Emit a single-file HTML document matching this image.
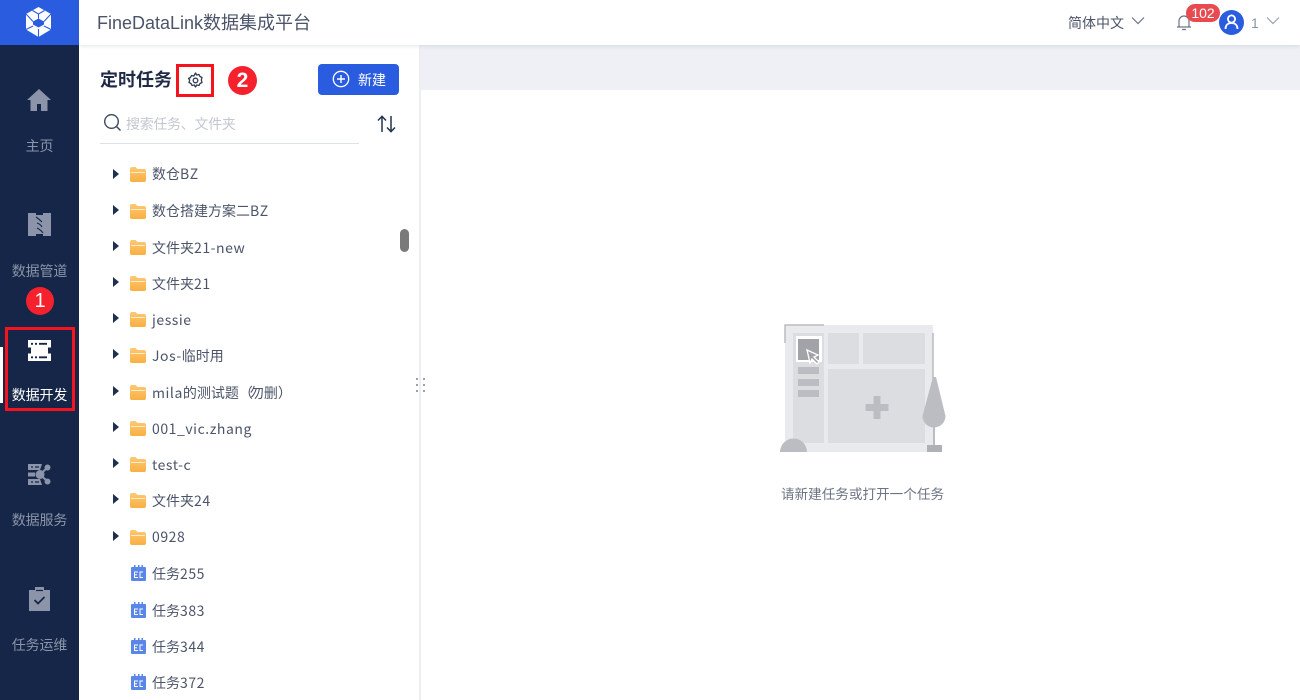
<!DOCTYPE html>
<html lang="zh">
<head>
<meta charset="utf-8">
<title>FineDataLink</title>
<style>
html,body{margin:0;padding:0;width:1300px;height:700px;overflow:hidden;background:#fff;font-family:"Liberation Sans","Noto Sans CJK SC",sans-serif}
.a{position:absolute}
.t{position:absolute;white-space:nowrap}
.nav{position:absolute;left:0;width:79px;text-align:center;font-size:14px;color:#8b94a8;line-height:18px;letter-spacing:-.1px}
.row{position:absolute;left:152px;font-family:"Noto Sans CJK SC","Liberation Sans",sans-serif;font-size:14px;line-height:20px;color:#4b5469;white-space:nowrap;margin-top:1px}
.row span{letter-spacing:.55px}
svg{position:absolute;display:block}
</style>
</head>
<body>
<div class="a" style="left:0;top:0;width:79px;height:700px;background:#152648"></div>
<div class="a" style="left:0;top:0;width:79px;height:45px;background:#2a5ce0"></div>
<svg style="left:26px;top:7px" width="25" height="30" viewBox="0 0 25 30"><path d="M12.500 0L25 7v15.500L12.500 30 0 22.500V7z" fill="#fff"/><path d="M12.500 11.500L18 14.500V19L12.500 22 7 19V14.500z" fill="#2a5ce0"/><path d="M7 17.500l5.500 3 5.500-3v1.500l-5.500 3L7 19z" fill="#fff"/><path d="M6.500 3.500L12.500 7l6-3.500M12.500 7v4.500M0 7l7 7.500M25 7l-7 7.500M0 22.500L7 19M25 22.500L18 19M12.500 22v8" stroke="#2a5ce0" stroke-width="1.100" fill="none"/></svg>
<div class="a" style="left:79px;top:0;width:1221px;height:45px;background:#fff;box-shadow:0 1px 4px rgba(60,70,100,.14);z-index:3"></div>
<div class="t" style="left:97px;top:11px;font-size:18px;line-height:24px;color:#4b5469;z-index:4">FineDataLink数据集成平台</div>
<div class="t" style="left:1068px;top:14px;font-size:14px;line-height:18px;color:#4b5469;z-index:4">简体中文</div>
<svg style="left:1131px;top:16px;z-index:4" width="14" height="10" viewBox="0 0 14 10"><path d="M1 1.500l6 6 6-6" fill="none" stroke="#6b7488" stroke-width="1.200"/></svg>
<svg style="left:1175px;top:13px;z-index:4" width="18" height="18" viewBox="0 0 18 18"><path d="M2 14h14M4 14V8a5 5 0 0 1 10 0v6M7 16.500h4" fill="none" stroke="#6b7488" stroke-width="1.200"/></svg>
<div class="a" style="left:1186px;top:4px;width:34px;height:18px;border-radius:9px;background:#e84b4f;color:#fff;font-size:14px;line-height:18px;text-align:center;z-index:5">102</div>
<div class="a" style="left:1219px;top:10px;width:25px;height:25px;border-radius:50%;background:#2a5ce0;z-index:5"></div>
<svg style="left:1219px;top:10px;z-index:6" width="25" height="25" viewBox="0 0 25 25"><circle cx="12.500" cy="9" r="3.600" fill="none" stroke="#fff" stroke-width="1.800"/><path d="M6.500 19c0-4 2.500-6 6-6s6 2 6 6" fill="none" stroke="#fff" stroke-width="1.800"/></svg>
<div class="t" style="left:1251px;top:14px;font-size:14px;line-height:18px;color:#8b94a8;z-index:4">1</div>
<svg style="left:1266px;top:16px;z-index:4" width="14" height="10" viewBox="0 0 14 10"><path d="M1 1.500l6 6 6-6" fill="none" stroke="#9aa1b2" stroke-width="1.200"/></svg>

<svg style="left:26px;top:88px" width="26" height="24" viewBox="0 0 26 24"><path d="M13 1L1 12h3.500v11h6.500v-7h4v7h6.500V12H25z" fill="#8b94a8"/></svg>
<div class="nav" style="top:137px">主页</div>
<svg style="left:28px;top:213px" width="23" height="23" viewBox="0 0 23 23"><rect width="23" height="23" fill="#8b94a8"/><path d="M8 0h7v2H8zM8 21h7v2H8z" fill="#152648"/><path d="M8 4c3 2 4 3 6 5M9 10c3 1 4 2 5 4M9 15c2 1 4 2 6 5" fill="none" stroke="#152648" stroke-width="1.100"/></svg>
<div class="nav" style="top:262px">数据管道</div>
<div class="a" style="left:26px;top:287px;width:28px;height:28px;border-radius:50%;background:#f5222d;color:#fff;font-size:20px;line-height:28px;text-align:center">1</div>
<svg style="left:28px;top:340px" width="23" height="21" viewBox="0 0 23 21"><path d="M0 0h23v7.500H0zM3 7.500h17v6H3zM0 13.500h23V21H0z" fill="#fff"/><path d="M3 3.800h2M7 3.800h2M11 3.800h8M3 17.300h2M7 17.300h2M11 17.300h8" stroke="#152648" stroke-width="1.800"/></svg>
<div class="a" style="left:0;top:347px;width:3px;height:56px;background:#fff"></div>
<div class="nav" style="top:386px;color:#fff">数据开发</div>
<div class="a" style="left:5px;top:327px;width:70px;height:84px;border:3.500px solid #f5141e;box-sizing:border-box"></div>
<svg style="left:28px;top:463px" width="23" height="23" viewBox="0 0 23 23"><path d="M0 1h14l-2 6H0zM0 9.500h7v4H0zM0 16h12l2 6H0z" fill="#8b94a8"/><path d="M3 4h2M7 4h4M3 19h2M7 19h4" stroke="#152648" stroke-width="1.200"/><circle cx="12" cy="11.500" r="4.500" fill="#8b94a8"/><circle cx="19.500" cy="4.500" r="3" fill="#8b94a8"/><circle cx="19.500" cy="18.500" r="3" fill="#8b94a8"/><path d="M12 11.500L19.500 4.500M12 11.500L19.500 18.500" stroke="#8b94a8" stroke-width="2"/></svg>
<div class="nav" style="top:511px">数据服务</div>
<svg style="left:29px;top:587px" width="21" height="24" viewBox="0 0 21 24"><path d="M0 3h6V0h9v3h6v21H0z" fill="#8b94a8"/><path d="M5.500 13l3.500 3.500 6.500-6.500" fill="none" stroke="#152648" stroke-width="1.800"/><path d="M7 3.500h7" stroke="#152648" stroke-width="1.200"/></svg>
<div class="nav" style="top:636px">任务运维</div>

<div class="t" style="left:100px;top:69px;font-size:18px;line-height:22px;font-weight:700;color:#1f2a44">定时任务</div>
<div class="a" style="left:176px;top:64px;width:38px;height:33px;border:3px solid #f5141e;box-sizing:border-box"></div>
<svg style="left:187px;top:72px" width="17" height="17" viewBox="0 0 17 17"><path d="M8.500 1l1.200 2 2.300-.5 1 2 2 1-.7 2.500.7 2.500-2 1-1 2-2.300-.5-1.200 2-1.200-2-2.300.5-1-2-2-1 .7-2.500L1.500 6.500l2-1 1-2 2.300.5z" fill="none" stroke="#2f3a55" stroke-width="1.300" stroke-linejoin="round"/><circle cx="8.500" cy="8.500" r="2.300" fill="none" stroke="#2f3a55" stroke-width="1.300"/></svg>
<div class="a" style="left:228px;top:66px;width:29px;height:29px;border-radius:50%;background:#f5222d;color:#fff;font-size:21px;font-weight:700;line-height:29px;text-align:center">2</div>
<div class="a" style="left:318px;top:64px;width:81px;height:31px;border-radius:4px;background:#2a5ce0"></div>
<svg style="left:332px;top:70px" width="18" height="18" viewBox="0 0 18 18"><circle cx="9" cy="9" r="7.700" fill="none" stroke="#fff" stroke-width="1.300"/><path d="M9 5v8M5 9h8" stroke="#fff" stroke-width="1.400"/></svg>
<div class="t" style="left:358px;top:71px;font-size:14px;line-height:18px;color:#fff">新建</div>
<svg style="left:103px;top:113px" width="19" height="19" viewBox="0 0 19 19"><circle cx="8.500" cy="8.500" r="6.800" fill="none" stroke="#3a4a60" stroke-width="1.400"/><path d="M13.500 13.500L17.500 17.500" stroke="#3a4a60" stroke-width="1.500"/></svg>
<div class="t" style="left:126px;top:114px;font-size:14px;line-height:20px;color:#c3c7d0;letter-spacing:-.3px">搜索任务、文件夹</div>
<div class="a" style="left:100px;top:143px;width:259px;height:1px;background:#dfe1e8"></div>
<svg style="left:377px;top:115px" width="19" height="18" viewBox="0 0 19 18"><path d="M5 17V1.500M1 5.500l4-4.200 4 4.200M14 1v15.500M10 12.500l4 4.200 4-4.200" fill="none" stroke="#22344e" stroke-width="1.500"/></svg>

<svg width="0" height="0"><defs>
<linearGradient id="g" x1="0" y1="0" x2="0" y2="1"><stop offset="0" stop-color="#fdc873"/><stop offset="1" stop-color="#f9b042"/></linearGradient>
<symbol id="f" viewBox="0 0 16 15"><path d="M0 2a2 2 0 0 1 2-2h3.500l2 2H14a2 2 0 0 1 2 2v9a2 2 0 0 1-2 2H2a2 2 0 0 1-2-2z" fill="url(#g)"/><path d="M1 5h14v1H1z" fill="#fdeccd"/></symbol>
<symbol id="c" viewBox="0 0 15 16"><path d="M1 2h13a1 1 0 0 1 1 1v12a1 1 0 0 1-1 1H1a1 1 0 0 1-1-1V3a1 1 0 0 1 1-1z" fill="#5a86e8"/><path d="M3 0h1.500v3H3zM7 0h1.500v3H7zM10.500 0H12v3h-1.500z" fill="#5a86e8"/><path d="M7 7H3.500v5.500H7M3.500 9.700H6M12 7H9v5.500h3" fill="none" stroke="#fff" stroke-width="1"/></symbol>
<symbol id="r" viewBox="0 0 8 10"><path d="M1 0l6 5-6 5z" fill="#1f2f4e"/></symbol>
</defs></svg>

<svg style="left:112px;top:169px" width="8" height="10"><use href="#r"/></svg><svg style="left:130px;top:167px" width="16" height="15"><use href="#f"/></svg><div class="row" style="top:163px">数仓<span>BZ</span></div>
<svg style="left:112px;top:205px" width="8" height="10"><use href="#r"/></svg><svg style="left:130px;top:204px" width="16" height="15"><use href="#f"/></svg><div class="row" style="top:200px">数仓搭建方案二<span>BZ</span></div>
<svg style="left:112px;top:241px" width="8" height="10"><use href="#r"/></svg><svg style="left:130px;top:240px" width="16" height="15"><use href="#f"/></svg><div class="row" style="top:237px">文件夹<span>21-new</span></div>
<svg style="left:112px;top:277px" width="8" height="10"><use href="#r"/></svg><svg style="left:130px;top:276px" width="16" height="15"><use href="#f"/></svg><div class="row" style="top:273px">文件夹<span>21</span></div>
<svg style="left:112px;top:313px" width="8" height="10"><use href="#r"/></svg><svg style="left:130px;top:312px" width="16" height="15"><use href="#f"/></svg><div class="row" style="top:309px"><span>jessie</span></div>
<svg style="left:112px;top:349px" width="8" height="10"><use href="#r"/></svg><svg style="left:130px;top:348px" width="16" height="15"><use href="#f"/></svg><div class="row" style="top:345px"><span>Jos-</span>临时用</div>
<svg style="left:112px;top:386px" width="8" height="10"><use href="#r"/></svg><svg style="left:130px;top:385px" width="16" height="15"><use href="#f"/></svg><div class="row" style="top:382px"><span>mila</span>的测试题<span style="letter-spacing:-3px">（</span>勿删<span style="letter-spacing:-3px">）</span></div>
<svg style="left:112px;top:422px" width="8" height="10"><use href="#r"/></svg><svg style="left:130px;top:421px" width="16" height="15"><use href="#f"/></svg><div class="row" style="top:418px"><span>001_vic.zhang</span></div>
<svg style="left:112px;top:458px" width="8" height="10"><use href="#r"/></svg><svg style="left:130px;top:457px" width="16" height="15"><use href="#f"/></svg><div class="row" style="top:454px"><span>test-c</span></div>
<svg style="left:112px;top:494px" width="8" height="10"><use href="#r"/></svg><svg style="left:130px;top:493px" width="16" height="15"><use href="#f"/></svg><div class="row" style="top:490px">文件夹<span>24</span></div>
<svg style="left:112px;top:531px" width="8" height="10"><use href="#r"/></svg><svg style="left:130px;top:530px" width="16" height="15"><use href="#f"/></svg><div class="row" style="top:526px"><span>0928</span></div>
<svg style="left:131px;top:565px" width="15" height="16"><use href="#c"/></svg><div class="row" style="top:563px">任务<span>255</span></div>
<svg style="left:131px;top:602px" width="15" height="16"><use href="#c"/></svg><div class="row" style="top:600px">任务<span>383</span></div>
<svg style="left:131px;top:638px" width="15" height="16"><use href="#c"/></svg><div class="row" style="top:636px">任务<span>344</span></div>
<svg style="left:131px;top:674px" width="15" height="16"><use href="#c"/></svg><div class="row" style="top:672px">任务<span>372</span></div>

<div class="a" style="left:400px;top:229px;width:9px;height:23px;border-radius:5px;background:#7a7a7a"></div>
<div class="a" style="left:419px;top:45px;width:2px;height:655px;background:#eceef3"></div>
<div class="a" style="left:421px;top:45px;width:879px;height:45px;background:#eef0f5"></div>
<svg style="left:414px;top:376px" width="14" height="18"><g fill="#9aa1ad"><rect x="2" y="2" width="2" height="2"/><rect x="9" y="2" width="2" height="2"/><rect x="2" y="8" width="2" height="2"/><rect x="9" y="8" width="2" height="2"/><rect x="2" y="14" width="2" height="2"/><rect x="9" y="14" width="2" height="2"/></g></svg>

<svg style="left:780px;top:323px" width="170" height="132" viewBox="0 0 170 132">
<path d="M5 2h148v127H5z" fill="#e9eaed"/>
<path d="M5 20V2h39" fill="none" stroke="#b9bbc0" stroke-width="1.500"/>
<path d="M153 10v50" stroke="#b9bbc0" stroke-width="1.500"/>
<rect x="13" y="10" width="31" height="110" fill="#dcdde1"/>
<rect x="48" y="10" width="31" height="31" fill="#dcdde1"/>
<rect x="83" y="10" width="62" height="31" fill="#dcdde1"/>
<rect x="48" y="46" width="97" height="74" fill="#dcdde1"/>
<path d="M93.500 73h7v8h8v7h-8v8h-7v-8h-8v-7h8z" fill="#bcbdc2"/>
<rect x="16" y="13" width="26" height="26" fill="#fff"/>
<rect x="18" y="16" width="21" height="21" fill="#a2a3a9"/>
<path d="M27 27l11 5-4 2 5 5-2 2-5-5-2 4z" fill="#a2a3a9" stroke="#fff" stroke-width="1.300"/>
<rect x="18" y="44" width="21" height="7" fill="#bcbdc2"/>
<rect x="18" y="56" width="21" height="7" fill="#bcbdc2"/>
<rect x="18" y="67" width="21" height="7" fill="#bcbdc2"/>
<path d="M0 129a13.500 13.500 0 0 1 27 0z" fill="#bcbdc2"/>
<path d="M153 54h3l9.500 39a11.500 11.500 0 0 1-23 0z" fill="#bcbdc2"/>
<rect x="153" y="100" width="2" height="24" fill="#bcbdc2"/>
<rect x="147" y="122" width="15" height="7" fill="#b0b1b7"/>
</svg>
<div class="t" style="left:780px;top:485px;width:165px;font-size:13.600px;line-height:20px;color:#6d7585;text-align:center">请新建任务或打开一个任务</div>
</body>
</html>
